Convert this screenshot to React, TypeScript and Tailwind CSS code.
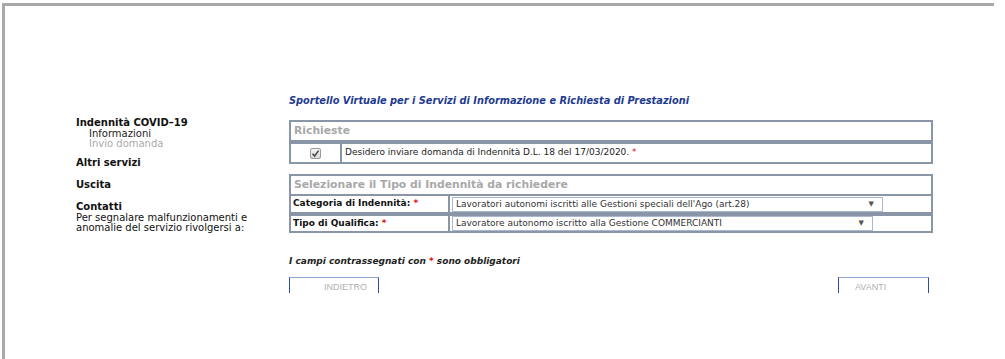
import React from "react";

const font = { fontFamily: '"DejaVu Sans", Verdana, sans-serif' };

function Checkbox() {
  return (
    <div className="w-[11px] h-[11px] border border-[#9a9a9a] rounded-[2px] bg-gradient-to-b from-[#f4f4f4] to-[#d8d8d8] flex items-center justify-center">
      <svg width="9" height="9" viewBox="0 0 9 9">
        <path d="M1.5 4.8 L3.6 7 L7.6 1.6" fill="none" stroke="#444" strokeWidth="1.5" />
      </svg>
    </div>
  );
}

function Select({ text, w }: { text: string; w: string }) {
  return (
    <div
      className={`${w} h-[15px] border border-[#a9b8cf] bg-white flex items-center justify-between pl-[3px] pr-[8px] text-[9px] text-[#333] leading-none`}
    >
      <span>{text}</span>
      <span className="text-[7px] text-[#555]">▼</span>
    </div>
  );
}

export default function App() {
  return (
    <div className="w-[1005px] h-[359px] bg-white overflow-hidden" style={font}>
      <div className="mt-[3px] ml-[2px] w-[992px] h-[356px] border-t-[3px] border-l-[3px] border-[#a9a9a9] flex">
        {/* left nav */}
        <div className="w-[284px] pl-[71px] pt-[112px] text-[10px] leading-[10.5px] text-[#111]">
          <div className="font-bold">Indennità COVID–19</div>
          <div className="pl-[13px] text-[#222]">Informazioni</div>
          <div className="pl-[13px] text-[#aaaaaa]">Invio domanda</div>
          <div className="font-bold mt-[8.5px]">Altri servizi</div>
          <div className="font-bold mt-[11px]">Uscita</div>
          <div className="font-bold mt-[12px]">Contatti</div>
          <div>Per segnalare malfunzionamenti e</div>
          <div>anomalie del servizio rivolgersi a:</div>
        </div>

        {/* main */}
        <div className="w-[644px] pt-[89px]">
          <div className="text-[9.8px] leading-[12px] font-bold italic text-[#1e3a8f]">
            Sportello Virtuale per i Servizi di Informazione e Richiesta di Prestazioni
          </div>

          {/* box 1 */}
          <div className="mt-[13px]">
            <div className="h-[22px] border-2 border-[#8a96a8] flex items-center pl-[3px] text-[10.8px] font-bold text-[#a8a8a8]">
              Richieste
            </div>
            <div className="h-[22px] border-2 border-[#8a96a8] flex">
              <div className="w-[51px] border-r-2 border-[#8a96a8] flex items-center justify-center">
                <Checkbox />
              </div>
              <div className="flex items-center pl-[3px] text-[9px] text-[#222]">
                Desidero inviare domanda di Indennità D.L. 18 del 17/03/2020.&nbsp;
                <span className="text-[#e01010]">*</span>
              </div>
            </div>
          </div>

          {/* box 2 */}
          <div className="mt-[10px]">
            <div className="h-[22px] border-2 border-[#8a96a8] flex items-center pl-[3px] text-[10.8px] font-bold text-[#a8a8a8]">
              Selezionare il Tipo di Indennità da richiedere
            </div>
            <div className="h-[18px] border-2 border-t-0 border-[#8a96a8] flex">
              <div className="w-[159px] border-r-2 border-[#8a96a8] flex items-center pl-[2px] text-[9px] font-bold text-[#111]">
                Categoria di Indennità:&nbsp;<span className="text-[#e01010]">*</span>
              </div>
              <div className="flex items-center pl-[2px]">
                <Select
                  w="w-[431px]"
                  text="Lavoratori autonomi iscritti alle Gestioni speciali dell'Ago (art.28)"
                />
              </div>
            </div>
            <div className="h-[19px] border-2 border-[#8a96a8] flex">
              <div className="w-[159px] border-r-2 border-[#8a96a8] flex items-center pl-[2px] text-[9px] font-bold text-[#111]">
                Tipo di Qualifica:&nbsp;<span className="text-[#e01010]">*</span>
              </div>
              <div className="flex items-center pl-[2px]">
                <Select
                  w="w-[421px]"
                  text="Lavoratore autonomo iscritto alla Gestione COMMERCIANTI"
                />
              </div>
            </div>
          </div>

          {/* footer note */}
          <div className="mt-[22px] text-[9px] leading-[12px] font-bold italic text-[#222]">
            I campi contrassegnati con <span className="text-[#e01010]">*</span> sono obbligatori
          </div>

          {/* buttons */}
          <div className="mt-[10px] h-[16px] overflow-hidden flex justify-between pr-[4px]">
            <div
              className="w-[90px] h-[24px] border-t border-t-[#8fa6d4] border-x-[1.5px] border-x-[#2d4ca3] pl-[34px] pt-[3px] text-[9px] text-[#b0b0b0]"
              style={{ fontFamily: '"Liberation Sans", Arial, sans-serif' }}
            >
              INDIETRO
            </div>
            <div
              className="w-[91px] h-[24px] border-t border-t-[#8fa6d4] border-x-[1.5px] border-x-[#2d4ca3] pl-[16px] pt-[3px] text-[9px] text-[#b0b0b0]"
              style={{ fontFamily: '"Liberation Sans", Arial, sans-serif' }}
            >
              AVANTI
            </div>
          </div>
        </div>
      </div>
    </div>
  );
}
